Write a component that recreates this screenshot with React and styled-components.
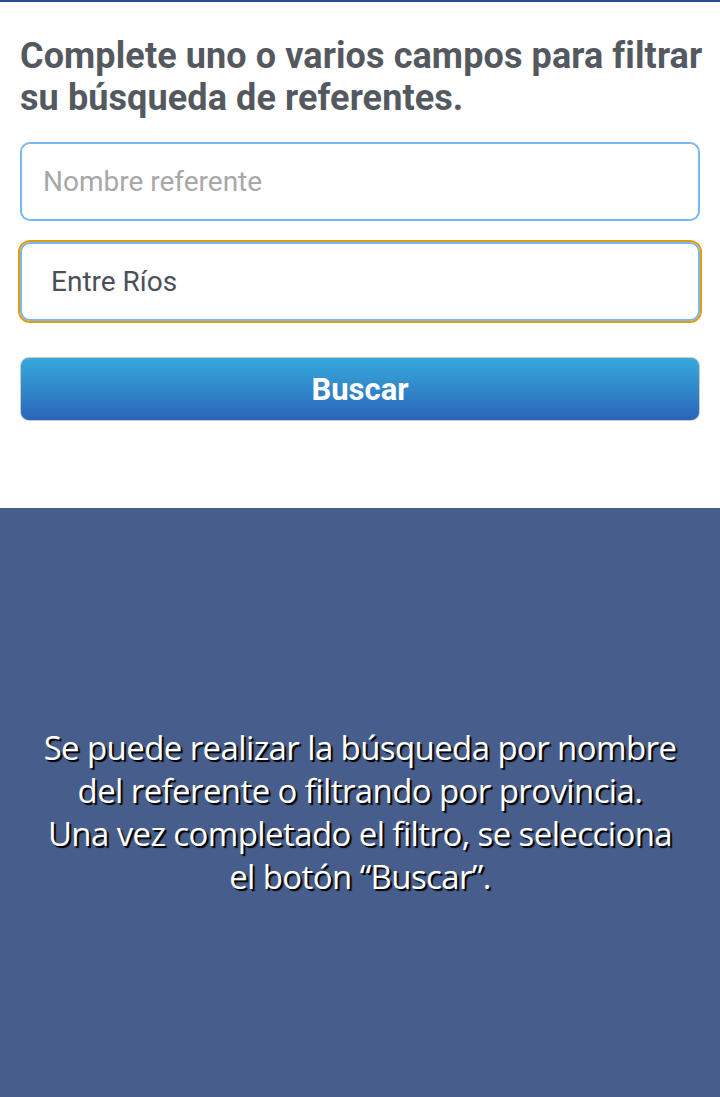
import styled, { createGlobalStyle } from "styled-components";

const GlobalStyle = createGlobalStyle`
  html, body {
    margin: 0;
    padding: 0;
    background: #ffffff;
  }
  body {
    font-family: Roboto, "Liberation Sans", sans-serif;
  }
`;

const Page = styled.div`
  width: 720px;
  height: 1097px;
  display: flex;
  flex-direction: column;
  border-top: 2px solid #2b4e8a;
  box-sizing: border-box;
`;

const SearchForm = styled.form`
  height: 506px;
  padding: 33px 20px 0 20px;
  box-sizing: border-box;
  display: flex;
  flex-direction: column;
`;

const Title = styled.h1`
  margin: 0 0 23px 0;
  font-size: 36px;
  line-height: 42px;
  font-weight: 700;
  letter-spacing: 0.1px;
  white-space: nowrap;
  color: #54585f;
`;

const Field = styled.input`
  height: 79px;
  box-sizing: border-box;
  border: 2px solid #76b8f4;
  border-radius: 10px;
  padding: 0 ${(p) => (p.$focused ? "29px" : "21px")};
  font-family: Roboto, "Liberation Sans", sans-serif;
  font-size: 28px;
  color: #4b5058;
  background: #fff;
  outline: ${(p) => (p.$focused ? "2px solid #e39b12" : "none")};
  outline-offset: 0;
  margin-bottom: ${(p) => p.$gap || 0}px;

  &::placeholder {
    color: #a8a8a8;
  }
`;

const SearchButton = styled.button`
  height: 64px;
  border: 1px solid #cbcbcb;
  border-radius: 9px;
  background: linear-gradient(to bottom, #36aadc, #2c65b8);
  color: #fff;
  font-family: Roboto, "Liberation Sans", sans-serif;
  font-size: 31px;
  font-weight: 700;
  cursor: pointer;
`;

const HelpPanel = styled.section`
  flex: 1;
  background: #475e8c;
  display: flex;
  align-items: center;
  justify-content: center;
  padding-top: 18px;
`;

const HelpText = styled.p`
  margin: 0;
  text-align: center;
  color: #fff;
  font-family: "Open Sans", Lato, sans-serif;
  font-size: 33px;
  line-height: 43px;
  letter-spacing: -0.6px;
  text-shadow: 2px 2px 1px #000;
`;

export default function App() {
  return (
    <>
      <GlobalStyle />
      <Page>
        <SearchForm onSubmit={(e) => e.preventDefault()}>
          <Title>
            Complete uno o varios campos para filtrar
            <br />
            su búsqueda de referentes.
          </Title>
          <Field placeholder="Nombre referente" $gap={21} />
          <Field defaultValue="Entre Ríos" $focused $gap={36} />
          <SearchButton type="submit">Buscar</SearchButton>
        </SearchForm>
        <HelpPanel>
          <HelpText>
            Se puede realizar la búsqueda por nombre
            <br />
            del referente o filtrando por provincia.
            <br />
            Una vez completado el filtro, se selecciona
            <br />
            el botón “Buscar”.
          </HelpText>
        </HelpPanel>
      </Page>
    </>
  );
}
